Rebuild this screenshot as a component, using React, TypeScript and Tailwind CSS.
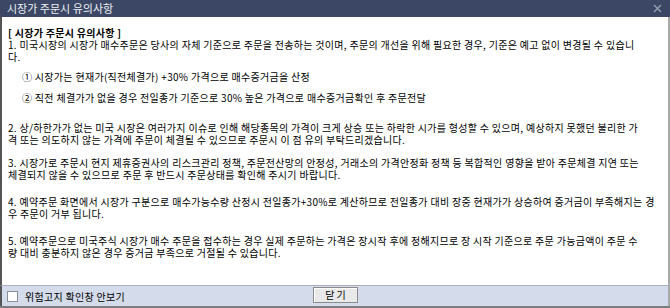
import React from "react";

const font = { fontFamily: '"Noto Sans CJK KR", "Noto Sans", sans-serif' };

function Line({ children, className = "" }: { children: React.ReactNode; className?: string }) {
	return <div className={`h-[12px] leading-[12px] whitespace-nowrap ${className}`}>{children}</div>;
}

export default function App() {
	return (
		<div
			className="w-[670px] h-[308px] flex flex-col bg-[#7d7d7d] text-[10px] text-black overflow-hidden"
			style={font}
		>
			{/* title bar */}
			<div className="h-[17px] bg-[#3b4764] flex items-center justify-between pl-[7px] pr-[6px]">
				<span className="text-[11px] text-[#eef1f6] leading-none">시장가 주문시 유의사항</span>
				<svg width="9" height="9" viewBox="0 0 9 9" className="mr-[2px]">
					<path d="M1 1L8 8M8 1L1 8" stroke="#9aa3b6" strokeWidth="1.2" />
				</svg>
			</div>

			{/* content */}
			<div className="flex-1 flex flex-col bg-white border-l-2 border-l-[#555] border-r-2 border-r-[#a8a8a8] pl-[6px] pt-[10px] tracking-[0.3px]">
				<Line className="font-bold">[ 시장가 주문시 유의사항 ]</Line>
				<Line>
					1. 미국시장의 시장가 매수주문은 당사의 자체 기준으로 주문을 전송하는 것이며, 주문의 개선을 위해 필요한 경우, 기준은 예고 없이 변경될 수 있습니
				</Line>
				<Line>다.</Line>

				<Line className="mt-[8px] pl-[14px]">① 시장가는 현재가(직전체결가) +30% 가격으로 매수증거금을 산정</Line>
				<Line className="mt-[9px] pl-[14px]">② 직전 체결가가 없을 경우 전일종가 기준으로 30% 높은 가격으로 매수증거금확인 후 주문전달</Line>

				<Line className="mt-[18px]">
					2. 상/하한가가 없는 미국 시장은 여러가지 이슈로 인해 해당종목의 가격이 크게 상승 또는 하락한 시가를 형성할 수 있으며, 예상하지 못했던 불리한 가
				</Line>
				<Line>격 또는 의도하지 않는 가격에 주문이 체결될 수 있으므로 주문시 이 점 유의 부탁드리겠습니다.</Line>

				<Line className="mt-[11px]">
					3. 시장가로 주문시 현지 제휴증권사의 리스크관리 정책, 주문전산망의 안정성, 거래소의 가격안정화 정책 등 복합적인 영향을 받아 주문체결 지연 또는
				</Line>
				<Line>체결되지 않을 수 있으므로 주문 후 반드시 주문상태를 확인해 주시기 바랍니다.</Line>

				<Line className="mt-[15px]">
					4. 예약주문 화면에서 시장가 구분으로 매수가능수량 산정시 전일종가+30%로 계산하므로 전일종가 대비 장중 현재가가 상승하여 증거금이 부족해지는 경
				</Line>
				<Line>우 주문이 거부 됩니다.</Line>

				<Line className="mt-[15px]">
					5. 예약주문으로 미국주식 시장가 매수 주문을 접수하는 경우 실제 주문하는 가격은 장시작 후에 정해지므로 장 시작 기준으로 주문 가능금액이 주문 수
				</Line>
				<Line>량 대비 충분하지 않은 경우 증거금 부족으로 거절될 수 있습니다.</Line>
			</div>

			{/* footer */}
			<div className="h-[21px] bg-[#d4dbea] border-t border-t-[#a9afbd] border-l-2 border-l-[#555] border-r-2 border-r-[#a8a8a8] flex items-center relative mb-[2px]">
				<div className="ml-[5px] w-[11px] h-[11px] bg-white border border-[#8a8f99]" />
				<span className="ml-[7px] text-[10px] tracking-[0.3px]">위험고지 확인창 안보기</span>
				<button className="absolute left-[311px] top-[1px] w-[45px] h-[16px] bg-[#e9e9e9] border border-[#8c8c8c] text-[10px] leading-[14px] shadow-[inset_1px_1px_0_#fff]">
					닫 기
				</button>
			</div>
		</div>
	);
}
